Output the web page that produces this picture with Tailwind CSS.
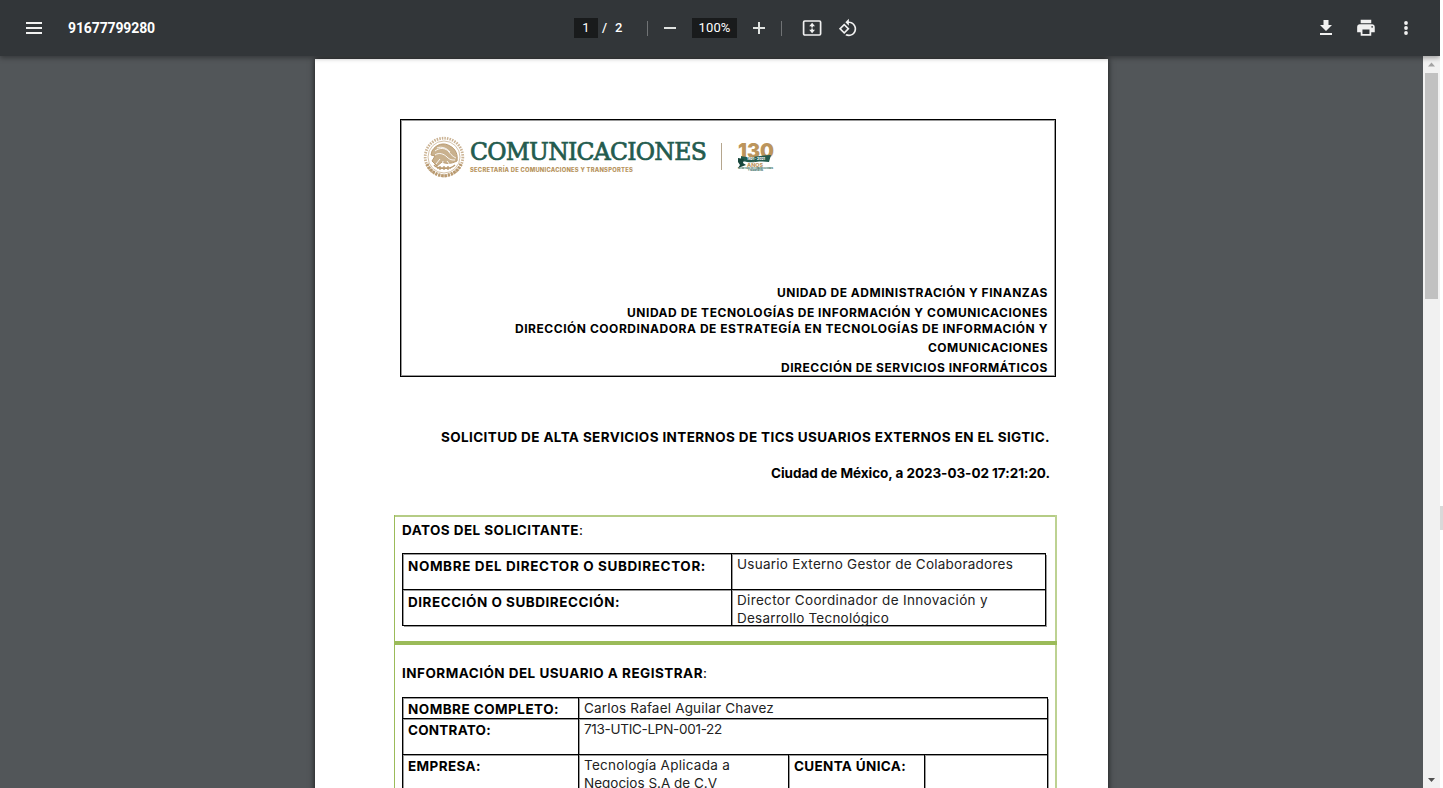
<!DOCTYPE html>
<html lang="es">
<head>
<meta charset="utf-8">
<title>91677799280</title>
<script src="https://cdn.jsdelivr.net/npm/@tailwindcss/browser@4"></script>
</head>
<body class="h-[788px] w-[1443px] overflow-hidden bg-white font-['Roboto',sans-serif]">
<div class="flex h-[788px] w-[1440px] flex-col overflow-hidden">
  <header class="relative z-10 flex h-14 shrink-0 items-center bg-[#323639] text-[#f1f1f1] shadow-[0_2px_5px_rgba(0,0,0,.35)]">
    <div class="flex w-[574px] items-center pl-[26px]">
      <svg class="h-3 w-4" viewBox="0 0 16 12" fill="currentColor"><path d="M0 0h16v2H0zM0 5h16v2H0zM0 10h16v2H0z"/></svg>
      <h1 class="ml-[26px] text-sm font-bold leading-5 text-white"><span data-w="87">91677799280</span></h1>
    </div>
    <div class="flex items-center text-[13px] font-medium leading-5 text-white">
      <span class="flex h-5 w-6 items-center justify-center bg-[#191b1c] font-normal">1</span>
      <span class="ml-1 w-[13px]">/</span>
      <span class="w-8">2</span>
      <span class="h-[15px] w-px bg-[#707375]"></span>
      <svg class="ml-4 h-3 w-3" viewBox="0 0 12 12" fill="#e0e3e1"><path d="M0 5h12v2H0z"/></svg>
      <span class="ml-4 flex h-5 w-[45px] items-center justify-center bg-[#191b1c] font-normal"><span data-w="32">100%</span></span>
      <svg class="ml-4 h-3 w-3" viewBox="0 0 12 12" fill="#e0e3e1"><path d="M0 5h5V0h2v5h5v2H7v5H5V7H0z"/></svg>
      <span class="ml-4 h-[15px] w-px bg-[#707375]"></span>
      <svg class="ml-5 h-5 w-5" viewBox="0 0 20 20"><rect x="1.6" y="3" width="17" height="14" rx="1.2" fill="none" stroke="#f1f1f1" stroke-width="1.7"/><path d="M10.1 4.8l2.9 3.4h-2.1v1.2H9.3V8.2H7.2zM10.1 15.2l2.9-3.4h-2.1v-1.2H9.3v1.2H7.2z" fill="#f1f1f1"/></svg>
      <svg class="ml-[14px] h-6 w-6" viewBox="0 0 24 24" fill="#f1f1f1"><path d="M7.34 6.41.86 12.9l6.49 6.48 6.49-6.48-6.5-6.49zM3.69 12.9l3.66-3.66L11 12.9l-3.66 3.66-3.65-3.66zm15.67-6.26C17.61 4.88 15.3 4 13 4V.76L8.76 5 13 9.24V6c1.79 0 3.58.68 4.95 2.05 2.73 2.73 2.73 7.17 0 9.9C16.58 19.32 14.79 20 13 20c-.97 0-1.94-.21-2.84-.61l-1.49 1.49C10.02 21.62 11.51 22 13 22c2.3 0 4.61-.88 6.36-2.64 3.52-3.51 3.52-9.21 0-12.72z" transform="translate(2.2 2.2) scale(.82)"/></svg>
    </div>
    <div class="ml-auto mr-[22px] flex gap-4 text-[#f1f1f1]">
      <svg class="h-6 w-6" viewBox="0 0 24 24" fill="currentColor"><path d="M9.5 4h5v5H18l-6 6-6-6h3.5zM6 17h12v2H6z"/></svg>
      <svg class="h-6 w-6" viewBox="0 0 24 24" fill="currentColor"><path transform="translate(1.4 1.2) scale(.88)" d="M19 8H5c-1.66 0-3 1.34-3 3v6h4v4h12v-4h4v-6c0-1.66-1.34-3-3-3zm-3 11H8v-5h8v5zm3-7c-.55 0-1-.45-1-1s.45-1 1-1 1 .45 1 1-.45 1-1 1zm-1-9H6v4h12V3z"/></svg>
      <svg class="h-6 w-6" viewBox="0 0 24 24" fill="currentColor"><circle cx="12" cy="7" r="1.9"/><circle cx="12" cy="12" r="1.9"/><circle cx="12" cy="17" r="1.9"/></svg>
    </div>
  </header>

  <div class="flex h-[732px]">
    <main class="h-full w-[1423px] overflow-hidden bg-[#525659] pl-[315px] pt-[3px]">
      <article class="h-[1123px] w-[793px] bg-white pt-[60px] font-['Inter',sans-serif] text-black shadow-[0_0_6px_rgba(0,0,0,.75)]">

        <section class="ml-[85px] flex h-[258px] w-[656px] flex-col justify-between border border-black ring-1 ring-inset ring-black/40">
          <div class="flex h-[60px] pl-[22px] pt-4">
            <svg class="h-[42px] w-[42px] shrink-0" viewBox="0 0 42 42" fill="none" stroke="#b99a70">
              <circle cx="21" cy="21" r="18.8" stroke-width="2.8" stroke-dasharray="1.5 1.1" opacity=".75"/>
              <circle cx="21" cy="21" r="16" stroke-width=".8" opacity=".75"/>
              <path d="M4 28c3 7 9 11 17 12 8-1 14-5 17-12" stroke-width="3.2" stroke-dasharray="2.2 1"/>
              <path d="M9 15c4-7 12-9 18-5 6 3 8 9 7 15-6 3-11 3-15 1l-5 4-5-5 3-5-4-1z" fill="#c9b18e" stroke-width="1"/>
              <path d="M12 15c5-4 11-3 14 1s5 5 7 6M12 19c4-3 9-1 12 2s5 3 8 3M14 12c4-2 10 0 13 4M17 23l-4 5m7-3l-1 5m5-5l3 4" stroke="#fff" stroke-width=".9"/>
              <path d="M11 29c3 4 16 5 21 0M14 32h14M17 30v4m4-4v4m4-4v4" stroke-width="1.3"/>
            </svg>
            <div class="ml-[5px] w-[236px] shrink-0">
              <div class="whitespace-nowrap pt-px font-['DejaVu_Serif',serif] text-[23.5px] font-normal leading-[31px] text-[#235b4e] [-webkit-text-stroke:0.7px_#235b4e]"><span data-w="236">COMUNICACIONES</span></div>
              <div class="h-2 whitespace-nowrap text-[5.8px] font-extrabold leading-[3px] text-[#b6935c]"><span data-w="163">SECRETARÍA DE COMUNICACIONES Y TRANSPORTES</span></div>
            </div>
            <div class="ml-[15px] mt-[7px] h-[27px] w-px shrink-0 bg-[#b5a68e]"></div>
            <svg class="ml-[14px] mt-[4px] h-8 w-[40px] shrink-0" viewBox="0 0 40 32" font-family="Inter, sans-serif" font-weight="800">
              <text x="2" y="17.5" font-size="20" font-weight="900" textLength="36" lengthAdjust="spacingAndGlyphs" fill="#bc955c">130</text>
              <path d="M5 16c10 3 18-1 30-1l-2 7c-10-2-19 2-28-1z" fill="#235b4e"/>
              <path d="M2 18l6 1-1 4 3 2-8 3 2-3-2-3z" fill="#17463b"/>
              <text x="11" y="20" font-size="3.4" fill="#fff" textLength="18">1891 - 2021</text>
              <text x="11" y="27.2" font-size="5.4" fill="#bc955c" textLength="16" lengthAdjust="spacingAndGlyphs">AÑOS</text>
              <text x="2" y="29.4" font-size="1.9" fill="#235b4e" textLength="35">SECRETARÍA DE COMUNICACIONES</text>
              <text x="12" y="31.4" font-size="1.9" fill="#235b4e" textLength="15">Y TRANSPORTES</text>
            </svg>
          </div>
          <div class="whitespace-nowrap pb-px pr-[7px] text-right text-xs font-bold">
            <p class="leading-5"><span data-w="271">UNIDAD DE ADMINISTRACIÓN Y FINANZAS</span></p>
            <p class="leading-5"><span data-w="421">UNIDAD DE TECNOLOGÍAS DE INFORMACIÓN Y COMUNICACIONES</span></p>
            <p class="leading-3"><span data-w="533">DIRECCIÓN COORDINADORA DE ESTRATEGÍA EN TECNOLOGÍAS DE INFORMACIÓN Y</span></p>
            <p class="leading-[26px]"><span data-w="120">COMUNICACIONES</span></p>
            <p class="leading-[14px]"><span data-w="267">DIRECCIÓN DE SERVICIOS INFORMÁTICOS</span></p>
          </div>
        </section>

        <div class="mr-[58px] mt-[50px] whitespace-nowrap text-right text-[13.5px] font-bold leading-5">
          <p><span data-w="609">SOLICITUD DE ALTA SERVICIOS INTERNOS DE TICS USUARIOS EXTERNOS EN EL SIGTIC.</span></p>
          <p class="mt-4"><span data-w="279">Ciudad de México, a 2023-03-02 17:21:20.</span></p>
        </div>

        <div class="ml-[79px] mt-[32px] w-[663px] border-l border-r-2 border-l-[#9bbb59] border-r-[#bdd292] text-[13.5px]">
          <section class="h-[126px] border-t-2 border-[#b5cc85] pl-[7px] pt-[3px]">
            <h2 class="leading-5"><b data-w="177">DATOS DEL SOLICITANTE</b>:</h2>
            <div class="mt-[13px] grid h-[73px] w-[644px] grid-cols-[329px_314px] grid-rows-[36px_36px] whitespace-nowrap border-l border-t border-black ring-1 ring-inset ring-black/40">
              <div class="border-b border-r border-black pl-[5px] pt-[2px] font-bold leading-5 shadow-[1px_1px_0_#0006]"><span data-w="298">NOMBRE DEL DIRECTOR O SUBDIRECTOR:</span></div>
              <div class="border-b border-r border-black pl-[5px] pt-px leading-[18px] text-[#222] shadow-[1px_1px_0_#0006]"><span data-w="276">Usuario Externo Gestor de Colaboradores</span></div>
              <div class="border-b border-r border-black pl-[5px] pt-[2px] font-bold leading-5 shadow-[1px_1px_0_#0006]"><span data-w="212">DIRECCIÓN O SUBDIRECCIÓN:</span></div>
              <div class="border-b border-r border-black pl-[5px] pt-px leading-[18px] text-[#222] shadow-[1px_1px_0_#0006]"><span data-w="251">Director Coordinador de Innovación y</span><br><span data-w="152">Desarrollo Tecnológico</span></div>
            </div>
          </section>
          <section class="-mr-[2px] border-t-4 border-[#9bbb59] pl-[7px] pt-[18px]">
            <h2 class="leading-5"><b data-w="301">INFORMACIÓN DEL USUARIO A REGISTRAR</b>:</h2>
            <div class="mt-[14px] grid w-[646px] grid-cols-[176px_210px_136px_123px] grid-rows-[21px_36px_54px] whitespace-nowrap border-l border-t border-black ring-1 ring-inset ring-black/40">
              <div class="border-b border-r border-black pl-[5px] pt-[1px] font-bold leading-5 shadow-[1px_1px_0_#0006]"><span data-w="151">NOMBRE COMPLETO:</span></div>
              <div class="col-span-3 border-b border-r border-black pl-[5px] pt-px leading-[18px] text-[#222] shadow-[1px_1px_0_#0006]"><span data-w="190">Carlos Rafael Aguilar Chavez</span></div>
              <div class="border-b border-r border-black pl-[5px] pt-[1px] font-bold leading-5 shadow-[1px_1px_0_#0006]"><span data-w="83">CONTRATO:</span></div>
              <div class="col-span-3 border-b border-r border-black pl-[5px] pt-px leading-[18px] text-[#222] shadow-[1px_1px_0_#0006]"><span data-w="138">713-UTIC-LPN-001-22</span></div>
              <div class="border-b border-r border-black pl-[5px] pt-[1px] font-bold leading-5 shadow-[1px_1px_0_#0006]"><span data-w="73">EMPRESA:</span></div>
              <div class="border-b border-r border-black pl-[5px] pt-px leading-[18px] text-[#222] shadow-[1px_1px_0_#0006]"><span data-w="146">Tecnología Aplicada a</span><br><span data-w="133">Negocios S.A de C.V</span></div>
              <div class="border-b border-r border-black pl-[5px] pt-[1px] font-bold leading-5 shadow-[1px_1px_0_#0006]"><span data-w="112">CUENTA ÚNICA:</span></div>
              <div class="border-b border-r border-black shadow-[1px_1px_0_#0006]"></div>
            </div>
          </section>
        </div>
      </article>
    </main>

    <aside class="flex h-full w-[17px] flex-col items-center bg-[#f1f1f1]">
      <svg class="h-[17px] w-[17px] shrink-0" viewBox="0 0 17 17"><path d="M8.5 6.5l3.5 4H5z" fill="#a3a3a3"/></svg>
      <div class="h-[226px] w-[13px] bg-[#c1c1c1]"></div>
      <svg class="mt-auto h-[17px] w-[17px] shrink-0" viewBox="0 0 17 17"><path d="M8.5 11l3.5-4H5z" fill="#505050"/></svg>
    </aside>
  </div>
</div>
<div class="absolute left-[1440px] top-[506px] h-6 w-[3px] bg-[#d9d9d9]"></div>
<script>
  // Track each line out to its typeset width, once styles and fonts are ready.
  function track() {
    for (const el of document.querySelectorAll('[data-w]')) {
      el.style.letterSpacing = '0px';
      const gap = (Number(el.dataset.w) - el.getBoundingClientRect().width) / el.textContent.length;
      el.style.letterSpacing = gap + 'px';
    }
  }
  new ResizeObserver(track).observe(document.querySelector('article'));
  window.addEventListener('load', track);
  document.fonts.ready.then(track);
</script>
</body>
</html>
